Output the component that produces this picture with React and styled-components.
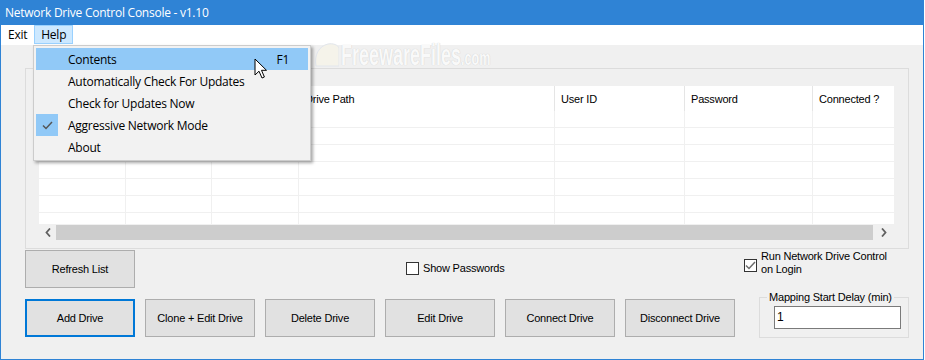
import React from "react";
import styled, { createGlobalStyle } from "styled-components";

const uiFont = `"Segoe UI", "Open Sans", "Noto Sans", sans-serif`;
const dlgFont = `"Liberation Sans", Arial, sans-serif`;
const accent = "#2f83d5";

const GlobalStyle = createGlobalStyle`
  html, body {
    margin: 0;
    padding: 0;
    background: #ffffff;
  }
  body {
    font-family: ${dlgFont};
  }
  * {
    box-sizing: border-box;
  }
`;

// the first three headers sit under the open Help menu
const columns = [
  { title: "", width: 86 },
  { title: "", width: 86 },
  { title: "", width: 87 },
  { title: "Drive Path", width: 256 },
  { title: "User ID", width: 130 },
  { title: "Password", width: 128 },
  { title: "Connected ?", width: 82 },
];
const gridCols = columns.map((c) => `${c.width}px`).join(" ");

const menuItems = [
  { label: "Contents", shortcut: "F1", hover: true },
  { label: "Automatically Check For Updates" },
  { label: "Check for Updates Now" },
  { label: "Aggressive Network Mode", checked: true },
  { label: "About" },
];

const buttons = [
  "Add Drive",
  "Clone + Edit Drive",
  "Delete Drive",
  "Edit Drive",
  "Connect Drive",
  "Disconnect Drive",
];

const Window = styled.div`
  position: relative;
  width: 924px;
  height: 360px;
  border: 1px solid ${accent};
  border-top: none;
  background: #f0f0f0;
  display: flex;
  flex-direction: column;
  overflow: hidden;
`;

const TitleBar = styled.div`
  height: 25px;
  flex: none;
  background: ${accent};
  color: #fff;
  font-family: ${uiFont};
  font-size: 12px;
  letter-spacing: -0.25px;
  display: flex;
  align-items: center;
  padding-left: 4px;
`;

const MenuBar = styled.div`
  height: 20px;
  flex: none;
  background: #fff;
  display: flex;
`;

const MenuTitle = styled.div`
  margin: 0 0 1px;
  padding: 0 6px;
  border: 1px solid ${(p) => (p.$active ? "#99d1ff" : "transparent")};
  background: ${(p) => (p.$active ? "#cce8ff" : "transparent")};
  font-family: ${uiFont};
  font-size: 12px;
  letter-spacing: -0.25px;
  display: flex;
  align-items: center;
  color: #000;
`;

const Client = styled.div`
  flex: 1;
  padding: 23px 0 0 24px;
  display: flex;
  flex-direction: column;
`;

const GroupPanel = styled.div`
  width: 884px;
  height: 181px;
  border: 1px solid #dcdcdc;
  padding: 17px 0 0 13px;
`;

const ListView = styled.div`
  width: 855px;
  height: 155px;
  background: #fff;
  display: flex;
  flex-direction: column;
  overflow: hidden;
`;

const HeaderRow = styled.div`
  display: grid;
  grid-template-columns: ${gridCols};
  height: 25px;
  flex: none;
`;

const HeaderCell = styled.div`
  border-left: 1px solid ${(p) => (p.$first ? "transparent" : "#e5e5e5")};
  padding: 0 6px;
  display: flex;
  align-items: center;
  font-size: 11px;
  letter-spacing: -0.2px;
  color: #000;
  white-space: nowrap;
  overflow: hidden;
`;

const Rows = styled.div`
  flex: 1;
  overflow: hidden;
`;

const Row = styled.div`
  display: grid;
  grid-template-columns: ${gridCols};
  height: 17px;
  border-bottom: 1px solid #f0f0f0;
`;

const Cell = styled.div`
  border-left: 1px solid ${(p) => (p.$first ? "transparent" : "#f0f0f0")};
`;

const HScroll = styled.div`
  height: 17px;
  flex: none;
  background: #f0f0f0;
  display: flex;
  align-items: stretch;
`;

const ScrollBtn = styled.div`
  width: ${(p) => p.$w}px;
  display: flex;
  align-items: center;
  justify-content: center;
`;

const Thumb = styled.div`
  flex: 1;
  margin: 1px 0;
  background: #cdcdcd;
`;

const ControlRow = styled.div`
  display: grid;
  grid-template-columns: 381px 338px auto;
  height: 38px;
  margin-top: 1px;
`;

const ButtonRow = styled.div`
  display: flex;
  align-items: flex-start;
  gap: 10px;
  margin-top: 2px;
`;

const Button = styled.button`
  width: 110px;
  height: 38px;
  margin-top: ${(p) => p.$offset || 0}px;
  padding: 0;
  background: #e1e1e1;
  border: ${(p) => (p.$focused ? "2px solid #0078d7" : "1px solid #adadad")};
  font-family: ${dlgFont};
  font-size: 11px;
  letter-spacing: -0.2px;
  color: #000;
  white-space: nowrap;
`;

const CheckLabel = styled.label`
  display: flex;
  align-items: flex-start;
  gap: 4px;
  margin-top: ${(p) => p.$top}px;
  font-size: 11px;
  letter-spacing: -0.2px;
  line-height: 13px;
  color: #000;
`;

const Box = styled.span`
  width: 13px;
  height: 13px;
  flex: none;
  margin-top: ${(p) => p.$offset || 0}px;
  border: 1px solid #333;
  background: #fff;
  display: flex;
  align-items: center;
  justify-content: center;
`;

const DelayGroup = styled.fieldset`
  margin: 0 0 0 14px;
  width: 150px;
  padding: 0 6px 8px 14px;
  border: 1px solid #dcdcdc;
  min-width: 0;
`;

const Legend = styled.legend`
  margin-left: -7px;
  padding: 0 2px;
  font-size: 11px;
  letter-spacing: -0.2px;
  line-height: 14px;
  color: #000;
`;

const TextInput = styled.div`
  margin-top: 2px;
  height: 23px;
  width: 127px;
  border: 1px solid #7a7a7a;
  background: #fff;
  font-size: 12px;
  padding: 3px 0 0 2px;
  color: #000;
`;

const Popup = styled.div`
  position: absolute;
  left: 32px;
  top: 45px;
  width: 278px;
  height: 116px;
  padding: 2px;
  background: #f2f2f2;
  border: 1px solid #cccccc;
  box-shadow: 2px 2px 3px rgba(0, 0, 0, 0.35);
  z-index: 2;
`;

const MenuItem = styled.div`
  height: 22px;
  display: grid;
  grid-template-columns: 32px 1fr auto;
  align-items: center;
  padding-right: 19px;
  background: ${(p) => (p.$hover ? "#91c9f7" : "transparent")};
  font-family: ${uiFont};
  font-size: 12px;
  letter-spacing: -0.25px;
  color: #000;
`;

const CheckCell = styled.span`
  width: 22px;
  height: 22px;
  display: flex;
  align-items: center;
  justify-content: center;
  background: ${(p) => (p.$on ? "#91c9f7" : "transparent")};
`;

const Watermark = styled.div`
  position: absolute;
  left: 312px;
  top: 40px;
  height: 30px;
  display: flex;
  align-items: flex-start;
  pointer-events: none;
  z-index: 1;
`;

const WatermarkText = styled.span`
  margin-left: 2px;
  font-family: "Liberation Sans Narrow", "Liberation Sans", sans-serif;
  font-weight: bold;
  font-size: 30px;
  line-height: 30px;
  color: #f9f9f9;
  text-shadow: 0 0 1px #cfcfcf, 0 0 1px #dcdcdc;
  transform: scaleX(0.6);
  transform-origin: left center;
  white-space: nowrap;
  small {
    font-size: 21px;
  }
`;

const Cursor = styled.svg`
  position: absolute;
  left: 253px;
  top: 58px;
  z-index: 3;
`;

const Chevron = ({ dir }) => (
  <svg width="6" height="9" viewBox="0 0 6 9">
    <polyline
      points={dir === "left" ? "5,0.5 1.5,4.5 5,8.5" : "1,0.5 4.5,4.5 1,8.5"}
      fill="none"
      stroke="#606060"
      strokeWidth="1.8"
    />
  </svg>
);

const Tick = ({ color }) => (
  <svg width="11" height="9" viewBox="0 0 11 9">
    <polyline
      points="1,4.5 4,7.5 10,1"
      fill="none"
      stroke={color}
      strokeWidth="1.5"
    />
  </svg>
);

export default function App() {
  return (
    <>
      <GlobalStyle />
      <Window>
        <TitleBar>Network Drive Control Console - v1.10</TitleBar>
        <MenuBar>
          <MenuTitle>Exit</MenuTitle>
          <MenuTitle $active>Help</MenuTitle>
        </MenuBar>
        <Client>
          <GroupPanel>
            <ListView>
              <HeaderRow>
                {columns.map((c, i) => (
                  <HeaderCell key={i} $first={i === 0}>
                    {c.title}
                  </HeaderCell>
                ))}
              </HeaderRow>
              <Rows>
                {Array.from({ length: 7 }).map((_, r) => (
                  <Row key={r}>
                    {columns.map((c, i) => (
                      <Cell key={i} $first={i === 0} />
                    ))}
                  </Row>
                ))}
              </Rows>
              <HScroll>
                <ScrollBtn $w={17}>
                  <Chevron dir="left" />
                </ScrollBtn>
                <Thumb />
                <ScrollBtn $w={21}>
                  <Chevron dir="right" />
                </ScrollBtn>
              </HScroll>
            </ListView>
          </GroupPanel>

          <ControlRow>
            <Button>Refresh List</Button>
            <CheckLabel $top={12}>
              <Box />
              Show Passwords
            </CheckLabel>
            <CheckLabel $top={0}>
              <Box $offset={9}>
                <Tick color="#6d6d6d" />
              </Box>
              <span>
                Run Network Drive Control
                <br />
                on Login
              </span>
            </CheckLabel>
          </ControlRow>

          <ButtonRow>
            {buttons.map((b, i) => (
              <Button key={b} $offset={9} $focused={i === 0}>
                {b}
              </Button>
            ))}
            <DelayGroup>
              <Legend>Mapping Start Delay (min)</Legend>
              <TextInput>1</TextInput>
            </DelayGroup>
          </ButtonRow>
        </Client>

        <Watermark>
          <svg width="26" height="28" viewBox="0 0 26 28">
            <path
              d="M3 26 C1 15 6 6 15 4 C20 3 25 5 26 8 L26 26 Z"
              fill="#f5f3ea"
              stroke="#e2e6ec"
              strokeWidth="1"
            />
          </svg>
          <WatermarkText>
            FreewareFiles<small>.com</small>
          </WatermarkText>
        </Watermark>

        <Popup>
          {menuItems.map((m) => (
            <MenuItem key={m.label} $hover={m.hover}>
              <CheckCell $on={m.checked}>
                {m.checked && <Tick color="#555" />}
              </CheckCell>
              <span>{m.label}</span>
              <span>{m.shortcut}</span>
            </MenuItem>
          ))}
        </Popup>

        <Cursor width="14" height="22" viewBox="0 0 14 22">
          <path
            d="M1 1 L1 17 L5 13.2 L8 20 L10.4 19 L7.5 12.3 L12.5 12.3 Z"
            fill="#fff"
            stroke="#000"
            strokeWidth="1"
            strokeLinejoin="miter"
          />
        </Cursor>
      </Window>
    </>
  );
}
